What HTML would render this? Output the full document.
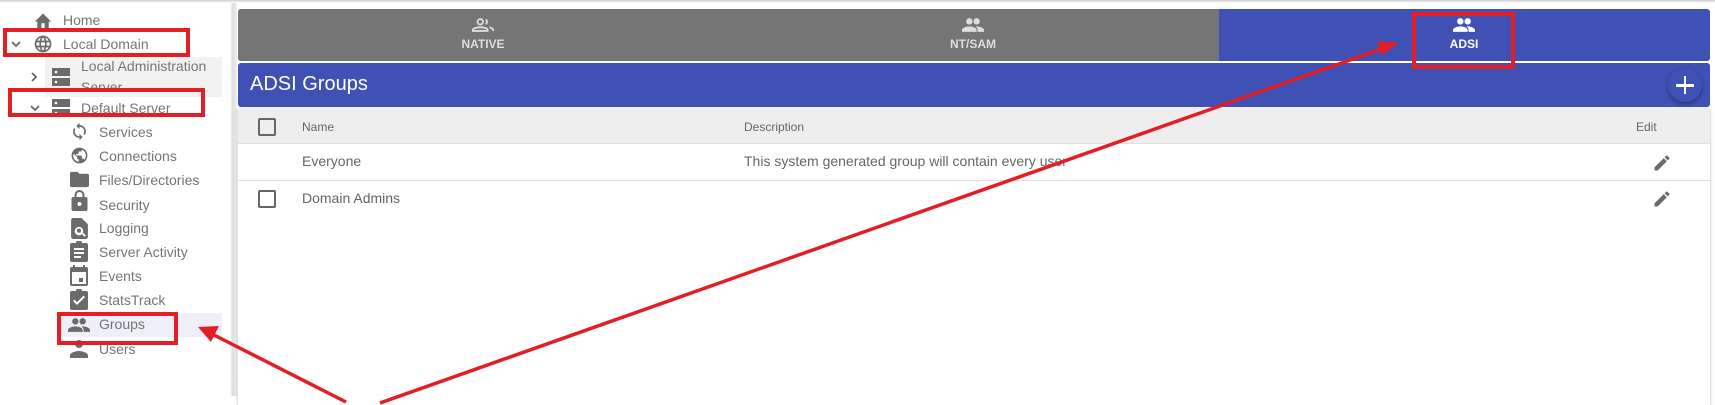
<!DOCTYPE html>
<html><head><style>
*{margin:0;padding:0;box-sizing:border-box}
body{width:1715px;height:405px;overflow:hidden;background:#fff;font-family:"Liberation Sans",Arial,sans-serif;position:relative;color:#757575}
.a{position:absolute}
.si{position:absolute;font-size:14px;color:#757575;line-height:16px}
.ic{position:absolute;fill:#6b6b6b}
.tab{position:absolute;top:9px;height:52px;color:#ddd;font-size:12px;font-weight:bold;text-align:center}
.row{position:absolute;left:238px;width:1472px;border-bottom:1px solid #e0e0e0;font-size:14px;color:#666}
.cb{position:absolute;left:258px;width:18px;height:18px;border:2px solid #666;border-radius:2px}
.rb{position:absolute;border:4px solid #e31e24}
</style></head><body>
<div class="a" style="left:0;top:0;width:1715px;height:3px;background:linear-gradient(#ccc,#fff)"></div>
<!-- sidebar -->
<div class="a" style="left:0;top:0;width:230px;height:358px;overflow:hidden">
<div class="a" style="left:45px;top:57px;width:177px;height:40px;background:#f2f2f2"></div>
<div class="a" style="left:60px;top:313px;width:162px;height:24px;background:#eeeff8"></div>

<svg class="ic" style="left:33px;top:11px" width="20" height="18" viewBox="0 0 24 22"><path d="M10 21v-6h4v6h5v-8h3L12 3 2 13h3v8z"/></svg>
<div class="si" style="left:63px;top:12px">Home</div>
<svg class="a" style="left:11px;top:41px" width="10" height="7" viewBox="0 0 10 7"><path d="M1 1l4 4 4-4" fill="none" stroke="#666" stroke-width="1.8"/></svg>
<svg class="ic" style="left:33px;top:34px" width="20" height="20" viewBox="0 0 24 24"><path d="M12 2a10 10 0 100 20 10 10 0 000-20zm6.9 6h-2.9a15.7 15.7 0 00-1.4-3.6A8 8 0 0118.9 8zM12 4c.8 1.2 1.5 2.5 1.9 4h-3.8c.4-1.4 1.1-2.8 1.9-4zM4.3 14a8 8 0 010-4h3.4a16 16 0 000 4zm.8 2h3a15.7 15.7 0 001.3 3.6A8 8 0 015.1 16zm3-8h-3a8 8 0 014.3-3.6C8.8 5.6 8.4 6.8 8.1 8zM12 20c-.8-1.2-1.5-2.5-1.9-4h3.8c-.4 1.4-1.1 2.8-1.9 4zm2.3-6H9.7a14.6 14.6 0 010-4h4.6a14.6 14.6 0 010 4zm.3 5.6c.6-1.1 1.1-2.3 1.4-3.6h2.9a8 8 0 01-4.3 3.6zM16.4 14a16 16 0 000-4h3.4a8 8 0 010 4z"/></svg>
<div class="si" style="left:63px;top:36px">Local Domain</div>
<svg class="a" style="left:31px;top:72px" width="7" height="10" viewBox="0 0 7 10"><path d="M1 1l4 4-4 4" fill="none" stroke="#666" stroke-width="1.8"/></svg>
<svg class="ic" style="left:52px;top:68px" width="18" height="18" viewBox="0 0 18 18"><rect x="0" y="0" width="18" height="8"/><rect x="0" y="10" width="18" height="8"/><circle cx="4" cy="4" r="1.3" fill="#fff"/><circle cx="4" cy="14" r="1.3" fill="#fff"/></svg>
<div class="si" style="left:81px;top:58px">Local Administration</div>
<div class="si" style="left:81px;top:79px;height:16px;overflow:hidden">Server</div>
<svg class="a" style="left:30px;top:105px" width="10" height="7" viewBox="0 0 10 7"><path d="M1 1l4 4 4-4" fill="none" stroke="#666" stroke-width="1.8"/></svg>
<svg class="ic" style="left:52px;top:99px" width="18" height="18" viewBox="0 0 18 18"><rect x="0" y="0" width="18" height="8"/><rect x="0" y="10" width="18" height="8"/><circle cx="4" cy="4" r="1.3" fill="#fff"/><circle cx="4" cy="14" r="1.3" fill="#fff"/></svg>
<div class="si" style="left:81px;top:100px">Default Server</div>

<svg class="ic" style="left:70px;top:122px" width="19" height="19" viewBox="0 0 24 24"><path d="M12 4V1L8 5l4 4V6a6 6 0 015.2 9l1.5 1.5A8 8 0 0012 4zm0 14a6 6 0 01-5.2-9L5.3 7.5A8 8 0 0012 20v3l4-4-4-4z"/></svg>
<div class="si" style="left:99px;top:124px">Services</div>
<svg class="ic" style="left:70px;top:146px" width="19" height="19" viewBox="0 0 24 24"><path d="M12 2a10 10 0 100 20 10 10 0 000-20zm-1 17.9A8 8 0 014 12l1-2 4 4v1a2 2 0 002 2zm6.9-2.5A2 2 0 0016 16h-1v-3a1 1 0 00-1-1H8v-2h2a1 1 0 001-1V7h2a2 2 0 002-2v-.4a8 8 0 012.9 12.8z"/></svg>
<div class="si" style="left:99px;top:148px">Connections</div>
<svg class="ic" style="left:70px;top:171px" width="19" height="17" viewBox="0 0 20 16"><path d="M8 0H2a2 2 0 00-2 2v12a2 2 0 002 2h16a2 2 0 002-2V4a2 2 0 00-2-2h-8z"/></svg>
<div class="si" style="left:99px;top:172px">Files/Directories</div>
<svg class="ic" style="left:71px;top:190px" width="17" height="21" viewBox="0 0 16 21"><path d="M14 7h-1V5A5 5 0 003 5v2H2a2 2 0 00-2 2v10a2 2 0 002 2h12a2 2 0 002-2V9a2 2 0 00-2-2zM5 5a3 3 0 016 0v2H5zm3 11a2 2 0 110-4 2 2 0 010 4z"/></svg>
<div class="si" style="left:99px;top:197px">Security</div>
<svg class="ic" style="left:71px;top:218px" width="17" height="21" viewBox="0 0 16 20"><path d="M10 0H2a2 2 0 00-2 2v16a2 2 0 002 2h12a2 2 0 002-2V6zm3 18l-2.7-2.7a4 4 0 11.9-1.4L14 16.6zM7.5 10a2 2 0 100 4 2 2 0 000-4z"/></svg>
<div class="si" style="left:99px;top:220px">Logging</div>
<svg class="ic" style="left:70px;top:241px" width="18" height="21" viewBox="0 0 18 21"><path d="M16 2h-4a3 3 0 00-6 0H2a2 2 0 00-2 2v15a2 2 0 002 2h14a2 2 0 002-2V4a2 2 0 00-2-2zM4 7h10v2H4zm0 4h10v2H4zm0 4h7v2H4z"/></svg>
<div class="si" style="left:99px;top:244px">Server Activity</div>
<svg class="ic" style="left:70px;top:265px" width="18" height="21" viewBox="0 0 18 21"><path d="M16 2h-1V0h-2v2H5V0H3v2H2a2 2 0 00-2 2v15a2 2 0 002 2h14a2 2 0 002-2V4a2 2 0 00-2-2zm0 17H2V7h14zm-3-6H9v4h4z"/></svg>
<div class="si" style="left:99px;top:268px">Events</div>
<svg class="ic" style="left:70px;top:289px" width="18" height="21" viewBox="0 0 18 21"><path d="M16 2h-4a3 3 0 00-6 0H2a2 2 0 00-2 2v15a2 2 0 002 2h14a2 2 0 002-2V4a2 2 0 00-2-2zM7 16l-4-4 1.4-1.4L7 13.2l6.6-6.6L15 8z"/></svg>
<div class="si" style="left:99px;top:292px">StatsTrack</div>
<svg class="ic" style="left:68px;top:318px" width="22" height="14" viewBox="0 0 24 15"><circle cx="8" cy="3.5" r="3.5"/><circle cx="16" cy="3.5" r="3.5"/><path d="M8 9c-3 0-8 1.5-8 4v2h16v-2c0-2.5-5-4-8-4zm8 0c-.4 0-.8 0-1.2.1 1.4 1 2.2 2.3 2.2 3.9v2h7v-2c0-2.5-5-4-8-4z"/></svg>
<div class="si" style="left:99px;top:316px">Groups</div>
<svg class="ic" style="left:70px;top:340px" width="18" height="20" viewBox="0 0 18 20"><circle cx="9" cy="4" r="4"/><path d="M9 11c-3 0-9 1.5-9 4.5V20h18v-4.5C18 12.5 12 11 9 11z"/></svg>
<div class="si" style="left:99px;top:341px">Users</div>
</div>
<div class="a" style="left:230px;top:3px;width:7px;height:393px;background:linear-gradient(90deg,#fff,#ddd 40%,#eee)"></div>

<!-- tabs -->
<div class="a" style="left:238px;top:9px;width:1472px;height:52px;background:#3f51b5;border-radius:3px"></div>
<div class="a" style="left:238px;top:9px;width:981px;height:52px;background:#757575;border-radius:3px 0 0 3px"></div>
<div class="tab" style="left:238px;width:490px">
<svg style="margin-top:9px" width="22" height="14" viewBox="0 0 24 15" fill="none" stroke="#ddd" stroke-width="2"><circle cx="9" cy="4" r="3"/><path d="M1 14v-1c0-2 4-3 8-3s8 1 8 3v1z"/><path d="M15 1.5a3 3 0 010 5M19 10c2 .6 4 1.5 4 3v1"/></svg>
<div style="margin-top:2px">NATIVE</div></div>
<div class="tab" style="left:728px;width:490px">
<svg style="margin-top:9px" width="22" height="14" viewBox="0 0 24 15" fill="#ddd"><circle cx="8" cy="3.5" r="3.5"/><circle cx="16" cy="3.5" r="3.5"/><path d="M8 9c-3 0-8 1.5-8 4v2h16v-2c0-2.5-5-4-8-4zm8 0c-.4 0-.8 0-1.2.1 1.4 1 2.2 2.3 2.2 3.9v2h7v-2c0-2.5-5-4-8-4z"/></svg>
<div style="margin-top:2px">NT/SAM</div></div>
<div class="tab" style="left:1219px;width:490px;color:#fff">
<svg style="margin-top:9px" width="22" height="14" viewBox="0 0 24 15" fill="#fff"><circle cx="8" cy="3.5" r="3.5"/><circle cx="16" cy="3.5" r="3.5"/><path d="M8 9c-3 0-8 1.5-8 4v2h16v-2c0-2.5-5-4-8-4zm8 0c-.4 0-.8 0-1.2.1 1.4 1 2.2 2.3 2.2 3.9v2h7v-2c0-2.5-5-4-8-4z"/></svg>
<div style="margin-top:2px">ADSI</div></div>

<!-- title -->
<div class="a" style="left:238px;top:63px;width:1472px;height:44px;background:#3f51b5;border-radius:3px"></div>
<div class="a" style="left:250px;top:73px;font-size:20px;color:#fff">ADSI Groups</div>
<div class="a" style="left:1668px;top:68px;width:34px;height:34px;border-radius:50%;background:#3f51b5;box-shadow:0 2px 5px rgba(0,0,0,.35)"></div>
<div class="a" style="left:1676px;top:84px;width:18px;height:2.5px;background:#fff"></div>
<div class="a" style="left:1683.7px;top:76px;width:2.5px;height:18px;background:#fff"></div>

<!-- table -->
<div class="a" style="left:238px;top:108px;width:1472px;height:297px;box-shadow:0 1px 3px rgba(0,0,0,.3);background:#fff"></div>
<div class="row" style="top:108px;height:36px;background:#eee;font-size:12px">
<span class="a" style="left:64px;top:12px">Name</span><span class="a" style="left:506px;top:12px">Description</span><span class="a" style="left:1398px;top:12px">Edit</span></div>
<div class="cb" style="top:118px"></div>
<div class="row" style="top:144px;height:37px"><span class="a" style="left:64px;top:9px">Everyone</span><span class="a" style="left:506px;top:9px">This system generated group will contain every user</span></div>
<div class="row" style="top:181px;height:36px;border-bottom:none"><span class="a" style="left:64px;top:9px">Domain Admins</span></div>
<div class="cb" style="top:190px"></div>
<svg class="ic" style="left:1652px;top:153px" width="20" height="20" viewBox="0 0 24 24"><path d="M3 17.2V21h3.8L17.8 9.9l-3.7-3.7zM20.7 7a1 1 0 000-1.4l-2.3-2.3a1 1 0 00-1.4 0l-1.8 1.8 3.7 3.7z"/></svg>
<svg class="ic" style="left:1652px;top:189px" width="20" height="20" viewBox="0 0 24 24"><path d="M3 17.2V21h3.8L17.8 9.9l-3.7-3.7zM20.7 7a1 1 0 000-1.4l-2.3-2.3a1 1 0 00-1.4 0l-1.8 1.8 3.7 3.7z"/></svg>

<!-- annotations -->
<div class="rb" style="left:3px;top:28px;width:187px;height:29px"></div>
<div class="rb" style="left:8px;top:88px;width:197px;height:29px"></div>
<div class="rb" style="left:57px;top:312px;width:121px;height:33px"></div>
<div class="rb" style="left:1412px;top:12px;width:103px;height:57px"></div>
<svg class="a" style="left:0;top:0" width="1715" height="405">
<line x1="346" y1="402" x2="212" y2="334" stroke="#e31e24" stroke-width="3.5"/>
<polygon points="198,327 219,326 211,342" fill="#e31e24"/>
<line x1="380" y1="403" x2="1384" y2="48" stroke="#e31e24" stroke-width="3.5"/>
<polygon points="1399,43 1382,55 1377,41" fill="#e31e24"/>
</svg>
</body></html>
